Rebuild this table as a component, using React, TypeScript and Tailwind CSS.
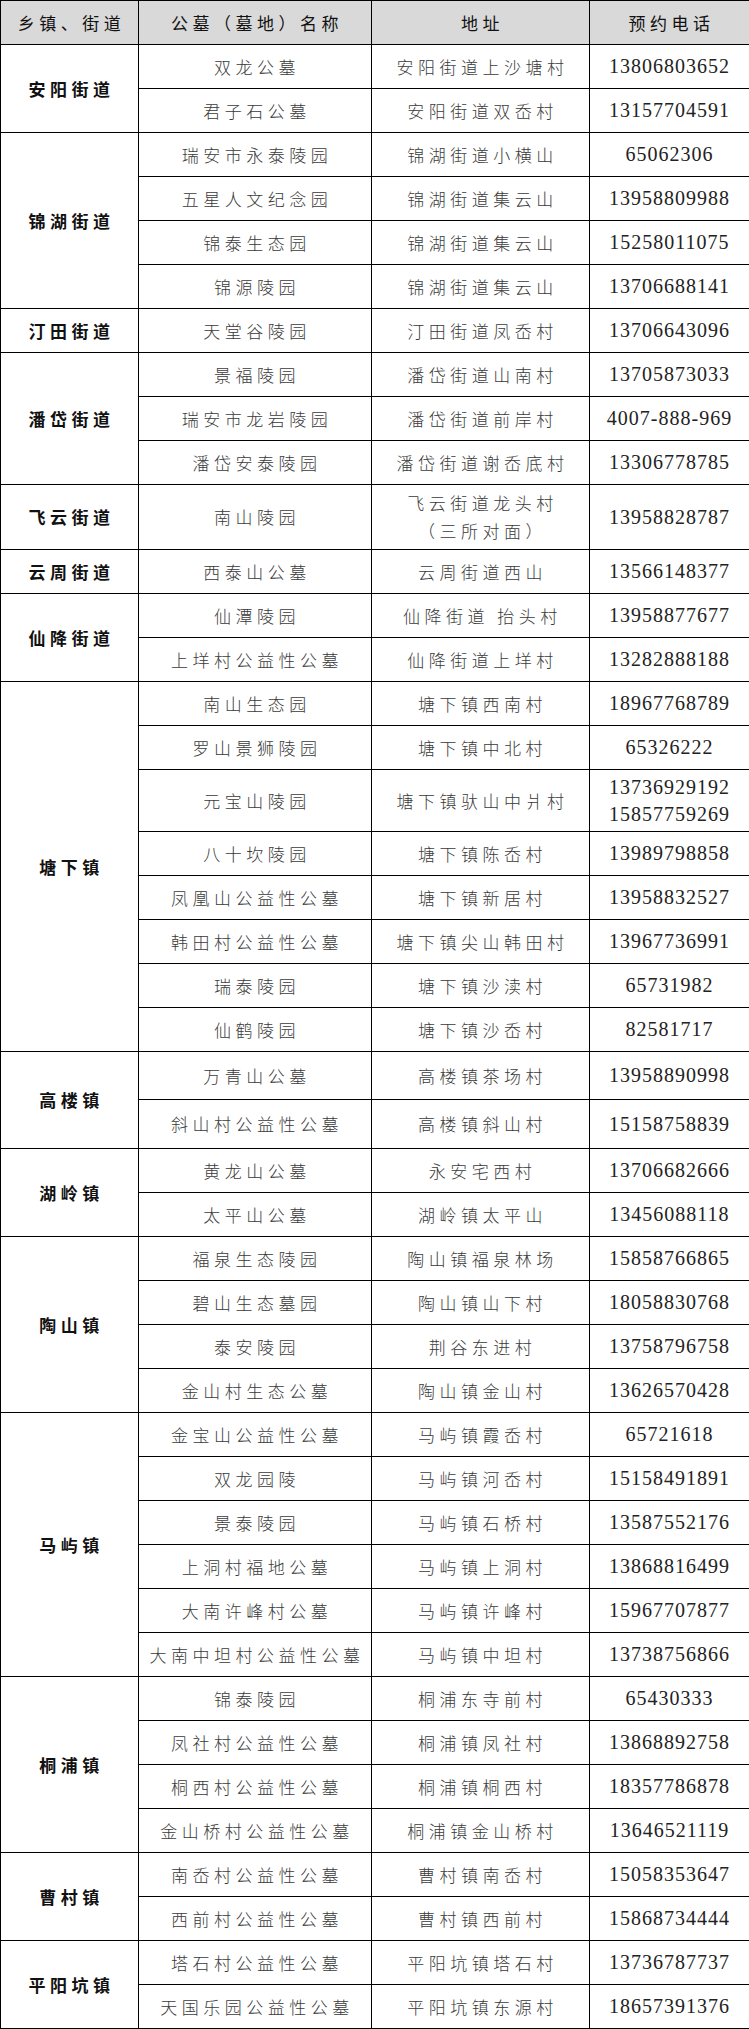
type Row = { name: string; addr: string[]; phone: string[]; h?: string };
type Group = { town: string; rows: Row[] };

const groups: Group[] = [
  {
    town: '安阳街道',
    rows: [
      { name: '双龙公墓', addr: ['安阳街道上沙塘村'], phone: ['13806803652'] },
      { name: '君子石公墓', addr: ['安阳街道双岙村'], phone: ['13157704591'] },
    ],
  },
  {
    town: '锦湖街道',
    rows: [
      { name: '瑞安市永泰陵园', addr: ['锦湖街道小横山'], phone: ['65062306'] },
      { name: '五星人文纪念园', addr: ['锦湖街道集云山'], phone: ['13958809988'] },
      { name: '锦泰生态园', addr: ['锦湖街道集云山'], phone: ['15258011075'] },
      { name: '锦源陵园', addr: ['锦湖街道集云山'], phone: ['13706688141'] },
    ],
  },
  {
    town: '汀田街道',
    rows: [{ name: '天堂谷陵园', addr: ['汀田街道凤岙村'], phone: ['13706643096'] }],
  },
  {
    town: '潘岱街道',
    rows: [
      { name: '景福陵园', addr: ['潘岱街道山南村'], phone: ['13705873033'] },
      { name: '瑞安市龙岩陵园', addr: ['潘岱街道前岸村'], phone: ['4007-888-969'] },
      { name: '潘岱安泰陵园', addr: ['潘岱街道谢岙底村'], phone: ['13306778785'] },
    ],
  },
  {
    town: '飞云街道',
    rows: [
      { name: '南山陵园', addr: ['飞云街道龙头村', '（三所对面）'], phone: ['13958828787'], h: 'h-[65px]' },
    ],
  },
  {
    town: '云周街道',
    rows: [{ name: '西泰山公墓', addr: ['云周街道西山'], phone: ['13566148377'] }],
  },
  {
    town: '仙降街道',
    rows: [
      { name: '仙潭陵园', addr: ['仙降街道 抬头村'], phone: ['13958877677'] },
      { name: '上垟村公益性公墓', addr: ['仙降街道上垟村'], phone: ['13282888188'] },
    ],
  },
  {
    town: '塘下镇',
    rows: [
      { name: '南山生态园', addr: ['塘下镇西南村'], phone: ['18967768789'] },
      { name: '罗山景狮陵园', addr: ['塘下镇中北村'], phone: ['65326222'] },
      { name: '元宝山陵园', addr: ['塘下镇驮山中爿村'], phone: ['13736929192', '15857759269'], h: 'h-[62px]' },
      { name: '八十坎陵园', addr: ['塘下镇陈岙村'], phone: ['13989798858'] },
      { name: '凤凰山公益性公墓', addr: ['塘下镇新居村'], phone: ['13958832527'] },
      { name: '韩田村公益性公墓', addr: ['塘下镇尖山韩田村'], phone: ['13967736991'] },
      { name: '瑞泰陵园', addr: ['塘下镇沙渎村'], phone: ['65731982'] },
      { name: '仙鹤陵园', addr: ['塘下镇沙岙村'], phone: ['82581717'] },
    ],
  },
  {
    town: '高楼镇',
    rows: [
      { name: '万青山公墓', addr: ['高楼镇茶场村'], phone: ['13958890998'], h: 'h-[48px]' },
      { name: '斜山村公益性公墓', addr: ['高楼镇斜山村'], phone: ['15158758839'], h: 'h-[49px]' },
    ],
  },
  {
    town: '湖岭镇',
    rows: [
      { name: '黄龙山公墓', addr: ['永安宅西村'], phone: ['13706682666'] },
      { name: '太平山公墓', addr: ['湖岭镇太平山'], phone: ['13456088118'] },
    ],
  },
  {
    town: '陶山镇',
    rows: [
      { name: '福泉生态陵园', addr: ['陶山镇福泉林场'], phone: ['15858766865'] },
      { name: '碧山生态墓园', addr: ['陶山镇山下村'], phone: ['18058830768'] },
      { name: '泰安陵园', addr: ['荆谷东进村'], phone: ['13758796758'] },
      { name: '金山村生态公墓', addr: ['陶山镇金山村'], phone: ['13626570428'] },
    ],
  },
  {
    town: '马屿镇',
    rows: [
      { name: '金宝山公益性公墓', addr: ['马屿镇霞岙村'], phone: ['65721618'] },
      { name: '双龙园陵', addr: ['马屿镇河岙村'], phone: ['15158491891'] },
      { name: '景泰陵园', addr: ['马屿镇石桥村'], phone: ['13587552176'] },
      { name: '上洞村福地公墓', addr: ['马屿镇上洞村'], phone: ['13868816499'] },
      { name: '大南许峰村公墓', addr: ['马屿镇许峰村'], phone: ['15967707877'] },
      { name: '大南中坦村公益性公墓', addr: ['马屿镇中坦村'], phone: ['13738756866'] },
    ],
  },
  {
    town: '桐浦镇',
    rows: [
      { name: '锦泰陵园', addr: ['桐浦东寺前村'], phone: ['65430333'] },
      { name: '凤社村公益性公墓', addr: ['桐浦镇凤社村'], phone: ['13868892758'] },
      { name: '桐西村公益性公墓', addr: ['桐浦镇桐西村'], phone: ['18357786878'] },
      { name: '金山桥村公益性公墓', addr: ['桐浦镇金山桥村'], phone: ['13646521119'] },
    ],
  },
  {
    town: '曹村镇',
    rows: [
      { name: '南岙村公益性公墓', addr: ['曹村镇南岙村'], phone: ['15058353647'] },
      { name: '西前村公益性公墓', addr: ['曹村镇西前村'], phone: ['15868734444'] },
    ],
  },
  {
    town: '平阳坑镇',
    rows: [
      { name: '塔石村公益性公墓', addr: ['平阳坑镇塔石村'], phone: ['13736787737'] },
      { name: '天国乐园公益性公墓', addr: ['平阳坑镇东源村'], phone: ['18657391376'] },
    ],
  },
];

const cjk = "font-['Noto_Sans_CJK_SC',sans-serif] text-[17px] tracking-[4.5px] pl-[4px]";
const cell = 'border border-black text-center align-middle p-0';

export default function App() {
  return (
    <div className="w-[749px] bg-white">
      <table className="w-[749px] border-collapse table-fixed">
        <colgroup>
          <col className="w-[138px]" />
          <col className="w-[233px]" />
          <col className="w-[218px]" />
          <col className="w-[160px]" />
        </colgroup>
        <thead>
          <tr className="h-[44px] bg-[#d9d9d9] text-[#111]">
            <th className={`${cell} ${cjk} font-normal`}>乡镇、街道</th>
            <th className={`${cell} ${cjk} font-normal`}>公墓（墓地）名称</th>
            <th className={`${cell} ${cjk} font-normal`}>地址</th>
            <th className={`${cell} ${cjk} font-normal`}>预约电话</th>
          </tr>
        </thead>
        <tbody>
          {groups.map((g) =>
            g.rows.map((r, i) => (
              <tr key={g.town + r.name} className={r.h ?? 'h-[44px]'}>
                {i === 0 && (
                  <td rowSpan={g.rows.length} className={`${cell} ${cjk} font-semibold text-[#111]`}>
                    {g.town}
                  </td>
                )}
                <td className={`${cell} ${cjk} font-light text-[#3a3a3a] whitespace-nowrap`}>{r.name}</td>
                <td className={`${cell} ${cjk} font-light text-[#3a3a3a] leading-[28px] whitespace-nowrap`}>
                  {r.addr.map((a) => (
                    <div key={a}>{a}</div>
                  ))}
                </td>
                <td className={`${cell} font-['Liberation_Serif',serif] text-[20px] tracking-[1px] leading-[27px] text-[#222]`}>
                  {r.phone.map((p) => (
                    <div key={p}>{p}</div>
                  ))}
                </td>
              </tr>
            ))
          )}
        </tbody>
      </table>
    </div>
  );
}
